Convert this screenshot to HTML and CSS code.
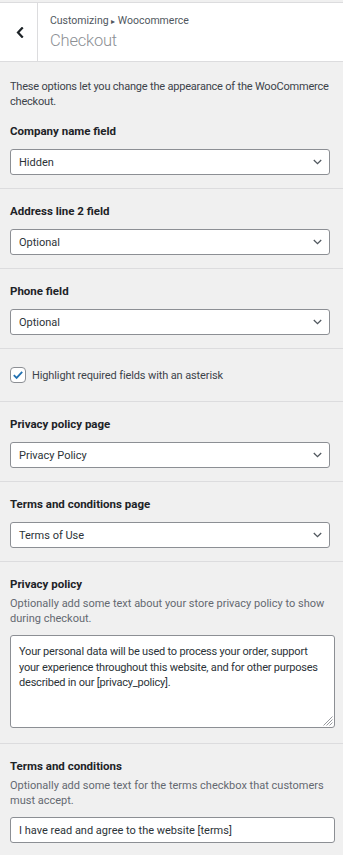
FILE: index.html
```html
<!DOCTYPE html>
<html lang="en">
<head>
<meta charset="utf-8">
<title>Customizing Checkout</title>
<link rel="stylesheet" href="styles.css">
</head>
<body>
<div class="top-strip"></div>
<header class="panel-header">
  <button class="back" aria-label="Back">
    <svg width="8" height="11" viewBox="0 0 8 11"><path d="M6 1.2 L2 5.5 L6 9.8" fill="none" stroke="#1d2327" stroke-width="2.2" stroke-linecap="square"/></svg>
  </button>
  <div class="panel-meta">
    <div class="crumb">Customizing <span class="tri">▸</span> Woocommerce</div>
    <div class="panel-title">Checkout</div>
  </div>
</header>

<main class="controls">
  <section class="control first">
    <p class="intro">These options let you change the appearance of the WooCommerce checkout.</p>
    <label class="title">Company name field</label>
    <div class="select"><span>Hidden</span><svg class="chev" width="9" height="6" viewBox="0 0 9 6"><path d="M0.8 1 L4.5 4.7 L8.2 1" fill="none" stroke="#50575e" stroke-width="1.3"/></svg></div>
  </section>

  <section class="control">
    <label class="title">Address line 2 field</label>
    <div class="select"><span>Optional</span><svg class="chev" width="9" height="6" viewBox="0 0 9 6"><path d="M0.8 1 L4.5 4.7 L8.2 1" fill="none" stroke="#50575e" stroke-width="1.3"/></svg></div>
  </section>

  <section class="control">
    <label class="title">Phone field</label>
    <div class="select"><span>Optional</span><svg class="chev" width="9" height="6" viewBox="0 0 9 6"><path d="M0.8 1 L4.5 4.7 L8.2 1" fill="none" stroke="#50575e" stroke-width="1.3"/></svg></div>
  </section>

  <section class="control check-row">
    <span class="checkbox"><svg width="12" height="10" viewBox="0 0 12 10"><path d="M1.8 5.2 L4.6 7.9 L10.2 1.8" fill="none" stroke="#2271b1" stroke-width="1.8"/></svg></span>
    <span class="check-label">Highlight required fields with an asterisk</span>
  </section>

  <section class="control">
    <label class="title">Privacy policy page</label>
    <div class="select"><span>Privacy Policy</span><svg class="chev" width="9" height="6" viewBox="0 0 9 6"><path d="M0.8 1 L4.5 4.7 L8.2 1" fill="none" stroke="#50575e" stroke-width="1.3"/></svg></div>
  </section>

  <section class="control">
    <label class="title">Terms and conditions page</label>
    <div class="select"><span>Terms of Use</span><svg class="chev" width="9" height="6" viewBox="0 0 9 6"><path d="M0.8 1 L4.5 4.7 L8.2 1" fill="none" stroke="#50575e" stroke-width="1.3"/></svg></div>
  </section>

  <section class="control tall">
    <label class="title">Privacy policy</label>
    <p class="desc">Optionally add some text about your store privacy policy to show during checkout.</p>
    <div class="textarea">Your personal data will be used to process your order, support your experience throughout this website, and for other purposes described in our [privacy_policy].
      <svg class="grip" width="10" height="10" viewBox="0 0 10 10"><path d="M9.5 0.5 L0.5 9.5 M9.5 3.5 L3.5 9.5 M9.5 6.5 L6.5 9.5" stroke="#8c8f94" stroke-width="0.9"/></svg>
    </div>
  </section>

  <section class="control last">
    <label class="title">Terms and conditions</label>
    <p class="desc">Optionally add some text for the terms checkbox that customers must accept.</p>
    <div class="input">I have read and agree to the website [terms]</div>
  </section>
</main>
</body>
</html>
```

FILE: styles.css
```css
* { box-sizing: border-box; }
html, body { margin: 0; padding: 0; }
body {
  background: #f0f0f0;
  font-family: Roboto, "Liberation Sans", sans-serif;
  color: #1d2327;
  width: 343px;
}
.top-strip {
  height: 2px;
  background: #f0f0f0;
  border-bottom: 1px solid #dcdcde;
  box-sizing: content-box;
}
.panel-header {
  display: flex;
  height: 59px;
  background: #fff;
  border-bottom: 1px solid #dcdcde;
}
.back {
  width: 38px;
  border: 0;
  border-right: 1px solid #dcdcde;
  background: #fff;
  display: flex;
  align-items: center;
  justify-content: center;
  padding: 0 0 0 2px;
}
.panel-meta {
  padding: 11px 0 0 12px;
}
.crumb {
  font-size: 10.5px;
  line-height: 14px;
  color: #50575e;
}
.tri { font-size: 8px; }
.panel-title {
  font-size: 16.5px;
  line-height: 22px;
  font-weight: 300;
  letter-spacing: -0.2px;
  color: #8c8f94;
  margin-top: 1px;
}
.controls { display: flex; flex-direction: column; }
.control {
  padding: 14px 10px 13px;
  border-bottom: 1px solid #dcdcde;
  display: flex;
  flex-direction: column;
}
.control.first { padding-top: 18px; padding-bottom: 13px; }
.control.tall { padding-bottom: 15px; }
.control.last { border-bottom: 0; }
.intro {
  margin: 0 0 14px;
  font-size: 11px;
  line-height: 14.5px;
  letter-spacing: -0.2px;
  color: #3c434a;
}
.title {
  font-size: 11.5px;
  font-weight: 700;
  line-height: 16px;
  margin-bottom: 10px;
  color: #1d2327;
}
.desc {
  margin: -5px 0 9px;
  font-size: 11px;
  line-height: 14.5px;
  color: #646970;
}
.select {
  width: 320px;
  height: 26px;
  background: #fff;
  border: 1px solid #8c8f94;
  border-radius: 3px;
  display: flex;
  align-items: center;
  justify-content: space-between;
  padding: 0 7px 0 8px;
  font-size: 11px;
  color: #2c3338;
}
.check-row {
  flex-direction: row;
  align-items: center;
  gap: 6px;
  padding: 18px 10px 18px;
}
.checkbox {
  width: 16px;
  height: 16px;
  border: 1px solid #8c8f94;
  border-radius: 4px;
  background: #fff;
  display: flex;
  align-items: center;
  justify-content: center;
}
.check-label {
  font-size: 11px;
  letter-spacing: -0.12px;
  color: #3c434a;
}
.textarea {
  position: relative;
  width: 325px;
  height: 93px;
  background: #fff;
  border: 1px solid #8c8f94;
  border-radius: 3px;
  padding: 8px 8px;
  font-size: 11px;
  line-height: 15.5px;
  letter-spacing: -0.2px;
  color: #2c3338;
}
.grip { position: absolute; right: 1px; bottom: 1px; }
.input {
  width: 325px;
  height: 26px;
  background: #fff;
  border: 1px solid #8c8f94;
  border-radius: 3px;
  padding: 0 8px;
  display: flex;
  align-items: center;
  font-size: 11px;
  color: #2c3338;
}
```
